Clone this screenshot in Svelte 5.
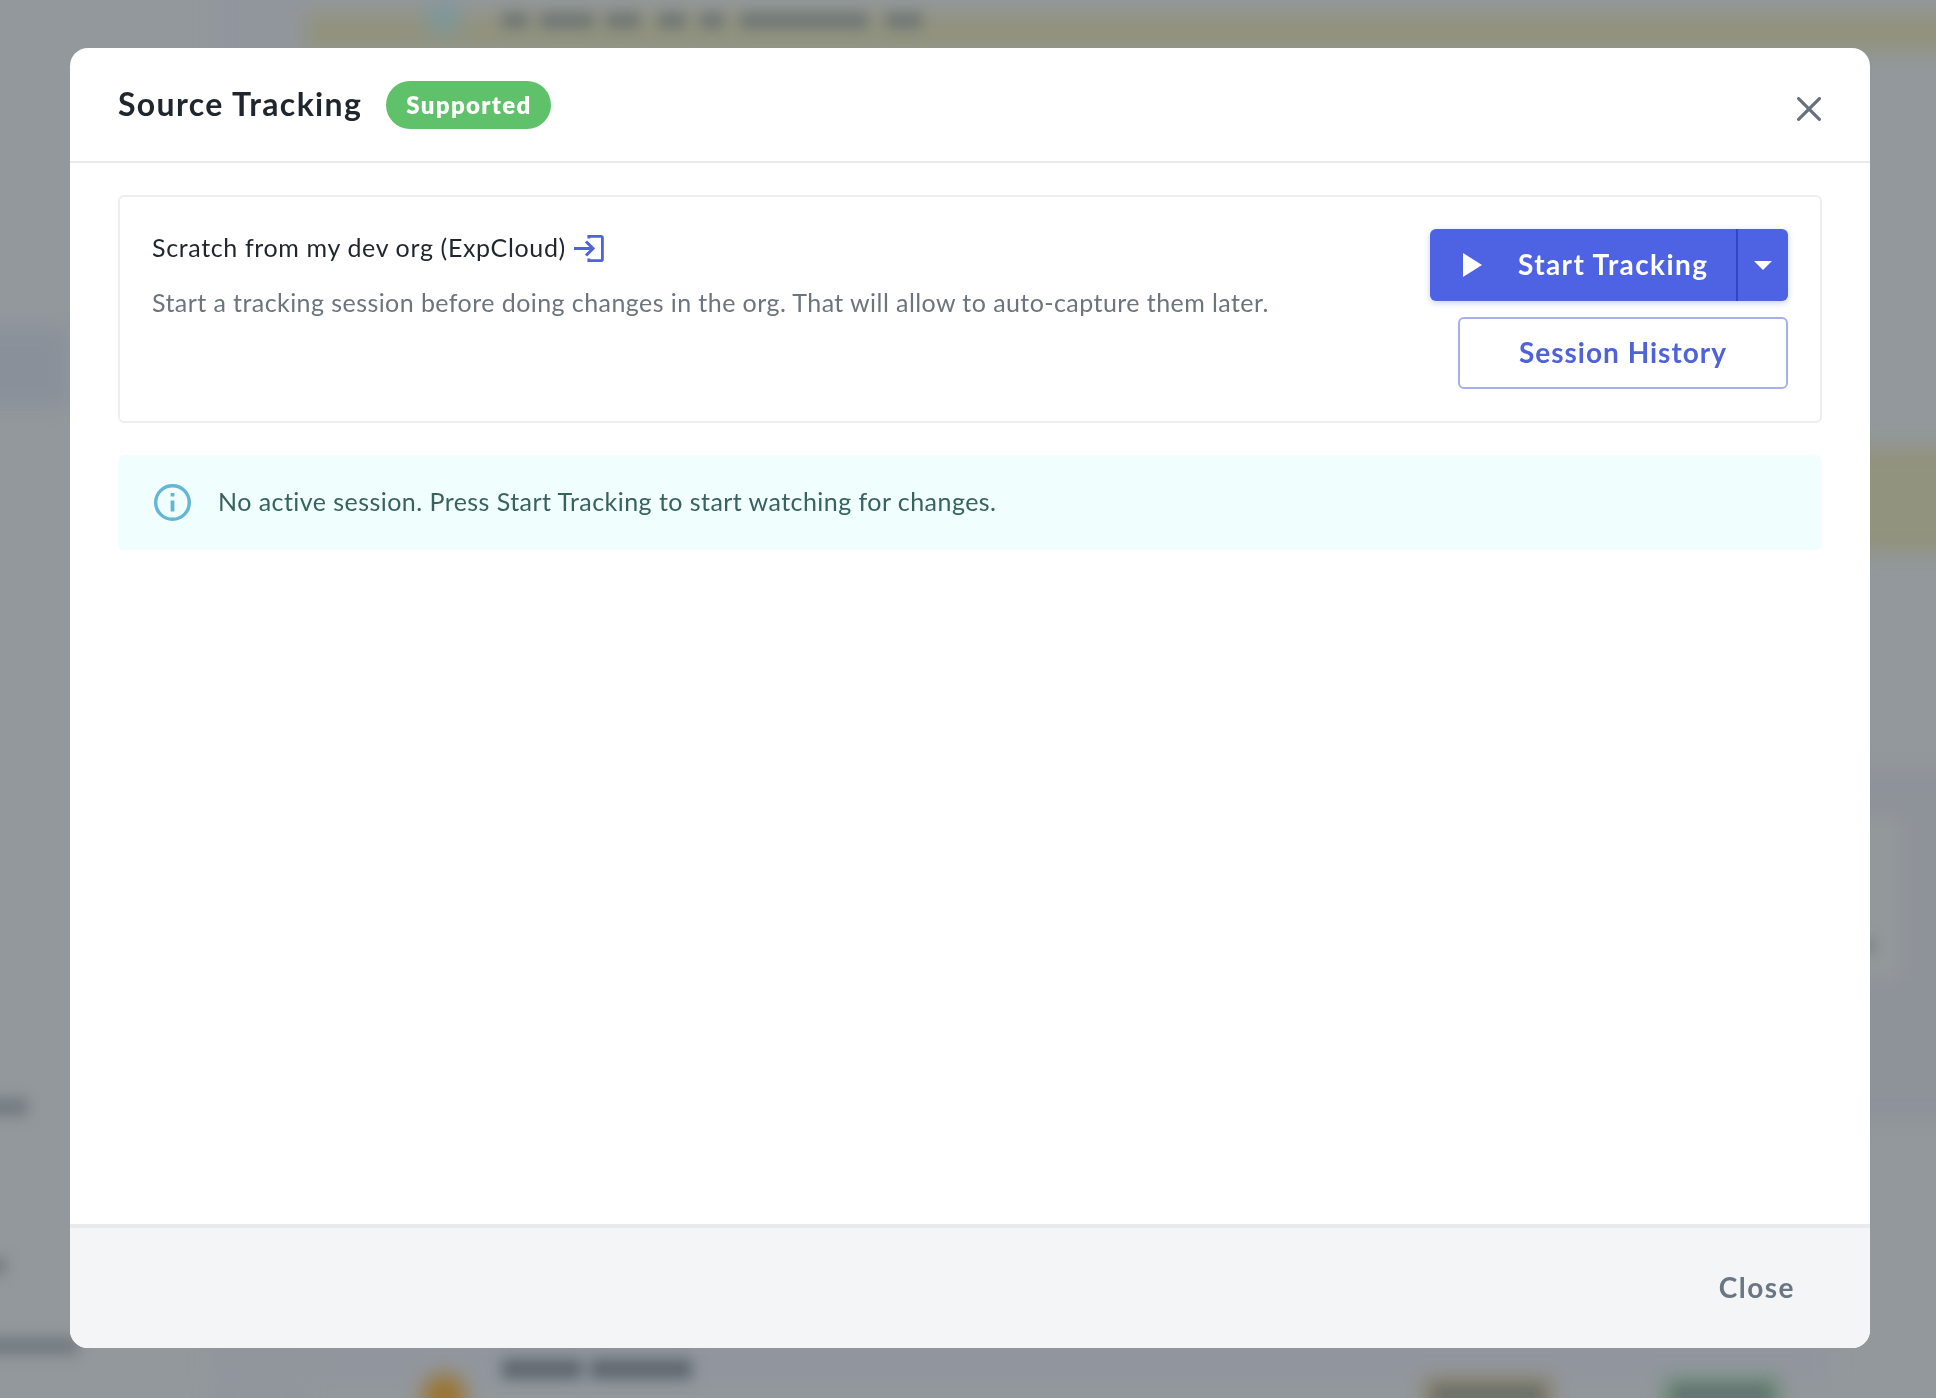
<script>
  let title = 'Source Tracking';
  let status = 'Supported';
  let orgName = 'Scratch from my dev org (ExpCloud)';
  let hint = 'Start a tracking session before doing changes in the org. That will allow to auto-capture them later.';
  let notice = 'No active session. Press Start Tracking to start watching for changes.';
  let open = true;

  function close() {
    open = false;
  }
</script>

<style>
  :global(body) {
    background: #93989c;
  }

  .page {
    position: relative;
    width: 1936px;
    height: 1398px;
    overflow: hidden;
    box-sizing: border-box;
    padding: 48px 66px 50px 70px;
    background: #93989c;
    font-family: Lato, 'Liberation Sans', sans-serif;
  }

  .backdrop {
    position: absolute;
    top: 0;
    left: 0;
  }

  .modal {
    position: relative;
    display: flex;
    flex-direction: column;
    width: 1800px;
    height: 1300px;
    border-radius: 18px;
    overflow: hidden;
    background: #fff;
  }

  header {
    display: flex;
    align-items: center;
    box-sizing: border-box;
    height: 115px;
    padding: 0 48px;
    border-bottom: 2px solid #ebebeb;
  }

  h1 {
    margin: 0 24px 2px 0;
    width: 244px;
    font-size: 32px;
    line-height: 48px;
    font-weight: 700;
    letter-spacing: 1.35px;
    white-space: nowrap;
    color: #1f262e;
  }

  .badge {
    width: 165px;
    height: 48px;
    border-radius: 24px;
    background: #5fc26b;
    color: #fff;
    font-size: 24px;
    line-height: 47px;
    font-weight: 800;
    letter-spacing: 1.35px;
    text-indent: 1px;
    text-align: center;
  }

  button {
    padding: 0;
    border: 0;
    background: none;
    font-family: inherit;
    font-size: 28px;
    font-weight: 700;
    letter-spacing: 1.5px;
    white-space: nowrap;
    cursor: pointer;
  }

  svg {
    display: block;
  }

  .dismiss {
    margin: 8px 1px 0 auto;
  }

  main {
    flex: 1;
    padding: 32px 48px;
  }

  .card {
    display: flex;
    justify-content: space-between;
    padding: 32px;
    border: 2px solid #eee;
    border-radius: 6px;
  }

  .org {
    display: flex;
    align-items: center;
    gap: 8px;
    height: 38px;
    color: #1f262e;
  }

  p {
    margin: 0;
    font-size: 25px;
    line-height: 40px;
    white-space: nowrap;
  }

  .name {
    margin-top: -2px;
    letter-spacing: 0.64px;
  }

  .hint {
    margin-top: 15px;
    letter-spacing: 0.43px;
    color: #6c757d;
  }

  .actions {
    display: flex;
    flex-direction: column;
    align-items: flex-end;
    gap: 16px;
  }

  .split {
    display: flex;
    height: 72px;
    border-radius: 6px;
    background: #4d63e3;
    box-shadow: 0 2px 6px rgba(77, 99, 227, 0.3);
  }

  .start {
    display: flex;
    align-items: center;
    width: 306px;
    padding-left: 33px;
    box-sizing: border-box;
    color: #fff;
  }

  .start svg {
    margin-right: 36px;
  }

  .start span {
    margin-bottom: 2px;
    letter-spacing: 1.4px;
  }

  .more {
    display: flex;
    align-items: center;
    justify-content: center;
    width: 52px;
    border-left: 2px solid #3047c4;
  }

  .history {
    width: 330px;
    height: 72px;
    padding-bottom: 2px;
    border: 2px solid #a6afea;
    border-radius: 6px;
    letter-spacing: 1px;
    color: #4f62d9;
  }

  .notice {
    display: flex;
    align-items: center;
    gap: 27.5px;
    height: 95px;
    margin-top: 32px;
    padding-left: 35.5px;
    border-radius: 6px;
    background: #f0fefe;
    color: #38625f;
  }

  .notice p {
    margin-bottom: 4px;
    letter-spacing: 0.45px;
  }

  footer {
    display: flex;
    align-items: center;
    justify-content: flex-end;
    box-sizing: border-box;
    height: 124px;
    padding: 0 75px 2px 0;
    border-top: 4px solid #e9eaeb;
    background: #f4f5f7;
  }

  footer button {
    color: #6a7681;
  }
</style>

<div class="page">
  <svg class="backdrop" width="1936" height="1398" viewBox="0 0 1936 1398" aria-hidden="true">
    <defs>
      <filter id="soft" x="-50%" y="-50%" width="200%" height="200%" color-interpolation-filters="sRGB">
        <feGaussianBlur stdDeviation="10" />
      </filter>
      <filter id="type" x="-20%" y="-100%" width="140%" height="300%" color-interpolation-filters="sRGB">
        <feGaussianBlur stdDeviation="7" />
      </filter>
    </defs>
    <g filter="url(#soft)">
      <rect x="215" y="-40" width="90" height="1480" fill="#91969d" />
      <rect x="304" y="12" width="1700" height="40" fill="#91937e" />
      <circle cx="444" cy="17" r="17" fill="#7d979b" />
      <rect x="-40" y="328" width="108" height="78" fill="#8a909a" />
      <rect x="1850" y="446" width="120" height="108" fill="#91937e" />
      <rect x="1850" y="770" width="120" height="350" fill="#8e9299" />
      <rect x="1840" y="815" width="64" height="166" fill="#93989b" />
      <rect x="210" y="1336" width="1620" height="48" fill="#91969d" />
      <circle cx="444" cy="1396" r="22" fill="#9a7430" />
      <rect x="1424" y="1378" width="128" height="60" fill="#858067" />
      <rect x="1664" y="1378" width="116" height="60" fill="#6b8a76" />
    </g>
    <g filter="url(#type)" fill="#5f686e">
      <g opacity="0.7">
        <rect x="502" y="13" width="26" height="15" />
        <rect x="540" y="13" width="54" height="15" />
        <rect x="606" y="13" width="34" height="15" />
        <rect x="658" y="13" width="28" height="15" />
        <rect x="700" y="13" width="24" height="15" />
        <rect x="740" y="13" width="128" height="15" />
        <rect x="886" y="13" width="36" height="15" />
        <rect x="1434" y="1386" width="108" height="18" />
        <rect x="1674" y="1386" width="96" height="18" />
      </g>
      <rect x="502" y="1359" width="80" height="20" />
      <rect x="590" y="1359" width="102" height="20" />
      <g opacity="0.6">
        <rect x="-20" y="1098" width="48" height="18" />
        <rect x="-20" y="1258" width="26" height="16" />
        <rect x="-20" y="1337" width="98" height="18" />
        <rect x="1860" y="940" width="14" height="12" />
      </g>
    </g>
  </svg>

  {#if open}
    <div class="modal" role="dialog" aria-label={title}>
      <header>
        <h1>{title}</h1>
        <span class="badge">{status}</span>
        <button class="dismiss" aria-label="Close" on:click={close}>
          <svg width="24" height="24" viewBox="0 0 24 24" fill="none" stroke="#66717b" stroke-width="3.2" stroke-linecap="round">
            <path d="M1.6 1.6 22.4 22.4M22.4 1.6 1.6 22.4" />
          </svg>
        </button>
      </header>

      <main>
        <section class="card">
          <div>
            <div class="org">
              <p class="name">{orgName}</p>
              <svg width="30" height="27" viewBox="0 0 30 27" fill="none" stroke="#4f63dc" stroke-width="3">
                <path d="M14.5 1.4H27Q28.4 1.4 28.4 2.8V24.2Q28.4 25.6 27 25.6H14.5M14.8 0V3.4M14.8 23.6V27" stroke-width="2.8" />
                <path d="M0 13.5H19M12 6.5 19 13.5 12 20.5" />
              </svg>
            </div>
            <p class="hint">{hint}</p>
          </div>
          <div class="actions">
            <div class="split">
              <button class="start">
                <svg width="19" height="24" viewBox="0 0 19 24" fill="#fff"><path d="M0 0 19 12 0 24Z" /></svg>
                <span>Start Tracking</span>
              </button>
              <button class="more" aria-label="More">
                <svg width="18" height="9" viewBox="0 0 18 9" fill="#fff"><path d="M0 0H18L9 9Z" /></svg>
              </button>
            </div>
            <button class="history">Session History</button>
          </div>
        </section>

        <section class="notice">
          <svg width="37" height="37" viewBox="0 0 37 37" fill="none" stroke="#62b7d6">
            <circle cx="18.5" cy="18.5" r="16.8" stroke-width="3.4" />
            <path d="M18.5 9V12.4M18.5 16.6V27.6" stroke-width="3.8" />
          </svg>
          <p>{notice}</p>
        </section>
      </main>

      <footer>
        <button on:click={close}>Close</button>
      </footer>
    </div>
  {/if}
</div>
